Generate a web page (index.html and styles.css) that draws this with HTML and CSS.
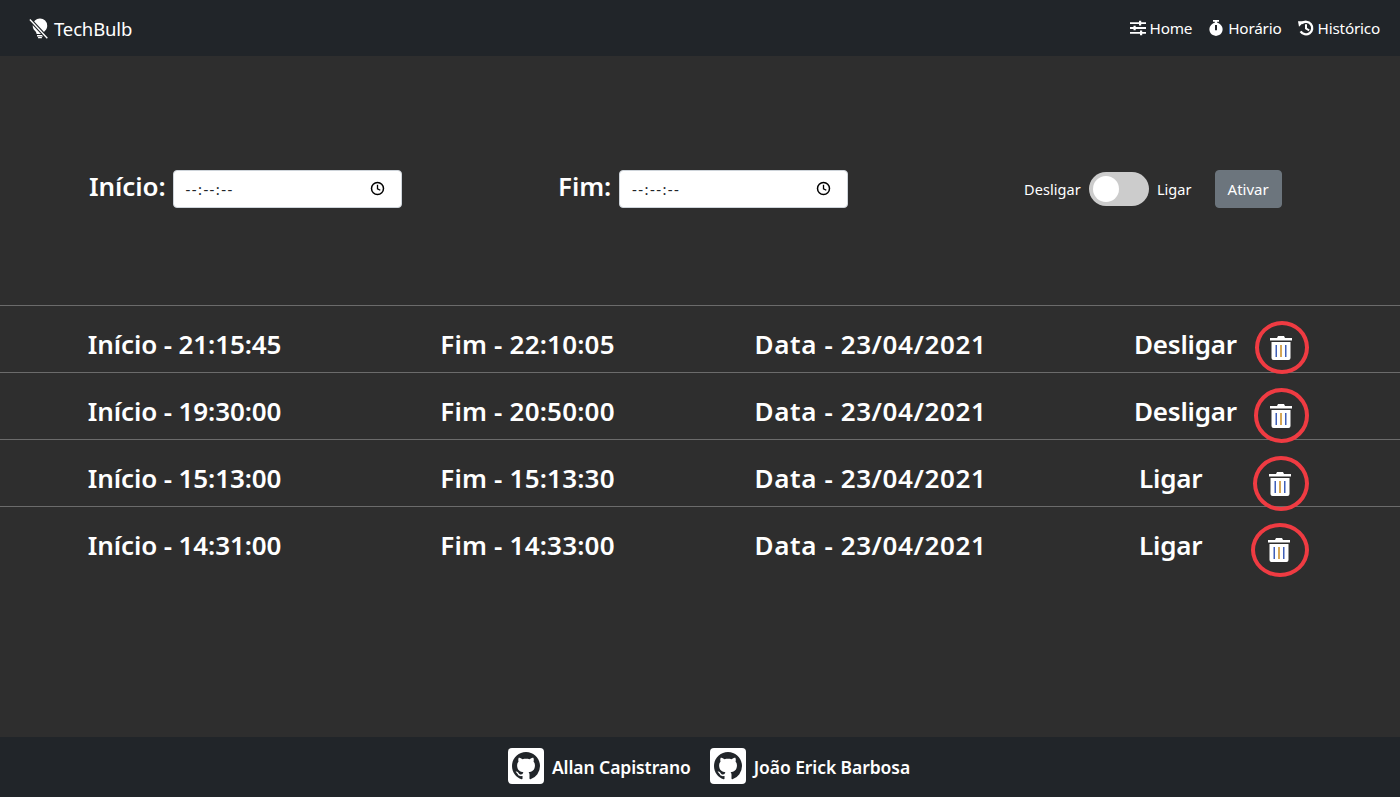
FILE: index.html
```html
<!DOCTYPE html>
<html lang="pt-BR">
<head>
<meta charset="utf-8">
<title>TechBulb</title>
<link rel="stylesheet" href="styles.css">
</head>
<body>
<nav class="navbar">
  <a class="brand">
    <svg class="brand-icon" viewBox="0 0 18 20"><path fill="#fff" d="M10.500 .5a6.800 6.800 0 0 1 6.800 6.800c0 2-.8 3.500-1.900 4.700-.9 1-1.600 2-1.800 3.200H7.200c-.2-1.200-.9-2.200-1.800-3.200C4.300 10.800 3.500 9.300 3.500 7.300A6.800 6.800 0 0 1 10.500 .5zM7.600 16.200h5.600v1.300H7.600zM8.600 18h3.600v1.300H8.600z"/><path fill="none" stroke="#212529" stroke-width="3.400" d="M.8 1.400l16.600 17.800"/><path fill="none" stroke="#fff" stroke-width="1.300" d="M.8 1.400l16.600 17.800"/></svg>
    <span>TechBulb</span>
  </a>
  <div class="nav-links">
    <a class="nav-link">
      <svg class="nav-icon" viewBox="0 0 16 16"><path fill="#fff" d="M0 2.200h9V.8h2.200v1.400H16v1.800h-4.800v1.400H9V4H0zM0 7.100h3.500V5.700h2.200v1.400H16v1.800H5.700v1.400H3.500V8.900H0zM0 12h10v-1.400h2.200V12H16v1.800h-3.800v1.400H10v-1.400H0z"/></svg>Home</a>
    <a class="nav-link">
      <svg class="nav-icon" viewBox="0 0 16 16"><path fill="#fff" d="M5 0h6v1.700H9.200v1.100a6.600 6.600 0 1 1-2.400 0V1.700H5z"/><path fill="#212529" d="M7 5h2v5.200H7z"/></svg>Horário</a>
    <a class="nav-link">
      <svg class="nav-icon" viewBox="0 0 16 16"><path fill="none" stroke="#fff" stroke-width="2.300" d="M3.800 3.300A6.300 6.300 0 1 1 2.600 11.400"/><path fill="#fff" d="M0 1.200h6.600L1 6.800zM7 4.200h2v3.700l2.700 1.600-1 1.700L7 9z"/></svg>Histórico</a>
  </div>
</nav>

<main class="content">
  <section class="controls">
    <div class="time-field time-start">
      <label class="time-label">Início:</label>
      <div class="time-input">
        <span>--:--:--</span>
        <svg class="clock" viewBox="0 0 16 16"><circle cx="8" cy="8" r="6.400" fill="none" stroke="#000" stroke-width="1.600"/><path fill="none" stroke="#000" stroke-width="1.400" d="M8 4v4.300l3 1.600"/></svg>
      </div>
    </div>
    <div class="time-field time-end">
      <label class="time-label">Fim:</label>
      <div class="time-input">
        <span>--:--:--</span>
        <svg class="clock" viewBox="0 0 16 16"><circle cx="8" cy="8" r="6.400" fill="none" stroke="#000" stroke-width="1.600"/><path fill="none" stroke="#000" stroke-width="1.400" d="M8 4v4.300l3 1.600"/></svg>
      </div>
    </div>
    <div class="switch-group">
      <span class="switch-label">Desligar</span>
      <span class="switch"><span class="knob"></span></span>
      <span class="switch-label">Ligar</span>
      <button class="btn-activate">Ativar</button>
    </div>
  </section>

  <section class="schedule">
    <div class="row">
      <span class="cell cell-start">Início - 21:15:45</span>
      <span class="cell cell-end">Fim - 22:10:05</span>
      <span class="cell cell-date">Data - 23/04/2021</span>
      <div class="action"><span class="action-name off">Desligar</span>
        <span class="trash t1"><svg class="trash-icon" viewBox="0 0 22 24"><path fill="#fff" d="M8 0h6l1 2h7v2.600H0V2h7zM1.500 6h19v16a2 2 0 0 1-2 2h-15a2 2 0 0 1-2-2z"/><path fill="#3f5fb8" d="M5.500 9h1.500v12H5.500zM15 9h1.500v12H15z"/><path fill="#c98a1f" d="M10.250 9h1.500v12h-1.500z"/></svg></span></div>
    </div>
    <div class="row">
      <span class="cell cell-start">Início - 19:30:00</span>
      <span class="cell cell-end">Fim - 20:50:00</span>
      <span class="cell cell-date">Data - 23/04/2021</span>
      <div class="action"><span class="action-name off">Desligar</span>
        <span class="trash t2"><svg class="trash-icon" viewBox="0 0 22 24"><path fill="#fff" d="M8 0h6l1 2h7v2.600H0V2h7zM1.500 6h19v16a2 2 0 0 1-2 2h-15a2 2 0 0 1-2-2z"/><path fill="#3f5fb8" d="M5.500 9h1.500v12H5.500zM15 9h1.500v12H15z"/><path fill="#c98a1f" d="M10.250 9h1.500v12h-1.500z"/></svg></span></div>
    </div>
    <div class="row">
      <span class="cell cell-start">Início - 15:13:00</span>
      <span class="cell cell-end">Fim - 15:13:30</span>
      <span class="cell cell-date">Data - 23/04/2021</span>
      <div class="action"><span class="action-name on">Ligar</span>
        <span class="trash t3"><svg class="trash-icon" viewBox="0 0 22 24"><path fill="#fff" d="M8 0h6l1 2h7v2.600H0V2h7zM1.500 6h19v16a2 2 0 0 1-2 2h-15a2 2 0 0 1-2-2z"/><path fill="#3f5fb8" d="M5.500 9h1.500v12H5.500zM15 9h1.500v12H15z"/><path fill="#c98a1f" d="M10.250 9h1.500v12h-1.500z"/></svg></span></div>
    </div>
    <div class="row">
      <span class="cell cell-start">Início - 14:31:00</span>
      <span class="cell cell-end">Fim - 14:33:00</span>
      <span class="cell cell-date">Data - 23/04/2021</span>
      <div class="action"><span class="action-name on">Ligar</span>
        <span class="trash t4"><svg class="trash-icon" viewBox="0 0 22 24"><path fill="#fff" d="M8 0h6l1 2h7v2.600H0V2h7zM1.500 6h19v16a2 2 0 0 1-2 2h-15a2 2 0 0 1-2-2z"/><path fill="#3f5fb8" d="M5.500 9h1.500v12H5.500zM15 9h1.500v12H15z"/><path fill="#c98a1f" d="M10.250 9h1.500v12h-1.500z"/></svg></span></div>
    </div>
  </section>
</main>

<footer class="footer">
  <a class="author">
    <span class="gh-box"><svg class="gh" viewBox="0 0 16 16"><path fill="#212529" d="M8 0C3.580 0 0 3.580 0 8c0 3.540 2.290 6.530 5.470 7.590.4.070.55-.17.55-.38 0-.19-.01-.82-.01-1.490-2.010.37-2.530-.49-2.690-.94-.09-.23-.48-.94-.82-1.130-.28-.15-.68-.52-.01-.53.630-.01 1.080.58 1.230.82.720 1.210 1.870.87 2.330.66.070-.52.280-.87.510-1.070-1.780-.2-3.640-.89-3.640-3.950 0-.87.310-1.590.82-2.150-.08-.2-.36-1.020.08-2.120 0 0 .67-.21 2.200.82.640-.18 1.320-.27 2-.27s1.360.09 2 .27c1.530-1.040 2.200-.82 2.200-.82.440 1.100.160 1.920.08 2.120.51.560.82 1.270.82 2.150 0 3.070-1.870 3.750-3.650 3.950.29.250.54.730.54 1.480 0 1.070-.01 1.930-.01 2.200 0 .21.150.46.550.38A8.010 8.010 0 0 0 16 8c0-4.420-3.580-8-8-8z"/></svg></span>
    <span class="author-name">Allan Capistrano</span>
  </a>
  <a class="author">
    <span class="gh-box"><svg class="gh" viewBox="0 0 16 16"><path fill="#212529" d="M8 0C3.580 0 0 3.580 0 8c0 3.540 2.290 6.530 5.470 7.590.4.070.55-.17.55-.38 0-.19-.01-.82-.01-1.490-2.010.37-2.530-.49-2.690-.94-.09-.23-.48-.94-.82-1.130-.28-.15-.68-.52-.01-.53.630-.01 1.080.58 1.230.82.720 1.210 1.870.87 2.330.66.070-.52.280-.87.510-1.070-1.780-.2-3.640-.89-3.640-3.950 0-.87.310-1.590.82-2.150-.08-.2-.36-1.020.08-2.120 0 0 .67-.21 2.200.82.640-.18 1.320-.27 2-.27s1.360.09 2 .27c1.530-1.040 2.200-.82 2.200-.82.440 1.100.160 1.920.08 2.120.51.560.82 1.270.82 2.150 0 3.070-1.870 3.750-3.650 3.950.29.250.54.730.54 1.480 0 1.070-.01 1.930-.01 2.200 0 .21.150.46.550.38A8.010 8.010 0 0 0 16 8c0-4.420-3.580-8-8-8z"/></svg></span>
    <span class="author-name">João Erick Barbosa</span>
  </a>
</footer>
</body>
</html>
```
FILE: styles.css
```css
* { box-sizing: border-box; }
html, body { margin: 0; height: 100%; }
body {
  display: flex;
  flex-direction: column;
  min-height: 797px;
  background: #2e2e2e;
  color: #fff;
  font-family: "Noto Sans", "Open Sans", sans-serif;
  overflow: hidden;
}
.navbar {
  height: 56px;
  flex: none;
  background: #212529;
  display: flex;
  align-items: center;
  justify-content: space-between;
  padding: 0 20px 0 29px;
}
.brand { display: flex; align-items: center; gap: 6px; font-size: 18.5px; letter-spacing: -0.15px; }
.brand-icon { width: 19px; height: 21px; }
.nav-links { display: flex; gap: 16px; }
.nav-link { display: flex; align-items: center; gap: 4px; font-size: 15.3px; letter-spacing: -0.2px; }
.nav-icon { width: 16px; height: 16px; }
.content { flex: 1; display: flex; flex-direction: column; }
.controls {
  height: 249px;
  flex: none;
  display: flex;
  align-items: center;
  padding: 16px 0 0 89px;
}
.time-field { display: flex; align-items: center; gap: 8px; }
.time-start { width: 469px; gap: 7px; }
.time-end { width: 466px; }
.time-label { font-size: 26px; font-weight: 600; letter-spacing: -0.1px; padding-bottom: 6px; }
.time-input {
  width: 229px;
  height: 38px;
  background: #fff;
  border: 1px solid #ced4da;
  border-radius: 4px;
  color: #212529;
  display: flex;
  align-items: center;
  justify-content: space-between;
  padding: 0 16px 0 12px;
  font-size: 15px;
  letter-spacing: 1.4px;
}
.clock { width: 15px; height: 15px; }
.switch-group { display: flex; align-items: center; }
.switch-label { font-size: 14.5px; letter-spacing: 0.08px; }
.switch {
  width: 60px;
  height: 34px;
  margin: 0 8px;
  border-radius: 17px;
  background: #ccc;
  display: flex;
  align-items: center;
  padding-left: 4px;
}
.knob { width: 26px; height: 26px; border-radius: 50%; background: #fff; }
.btn-activate {
  margin-left: 23px;
  width: 67px;
  height: 38px;
  border: 1px solid #6c757d;
  border-radius: 4px;
  background: #6c757d;
  color: #fff;
  font: inherit;
  font-size: 15px;
  padding: 0;
}
.row {
  height: 67px;
  border-top: 1px solid #6b6b6b;
  display: grid;
  grid-template-columns: 343px 343px 343px 1fr;
  padding-left: 13px;
  align-items: center;
}
.cell {
  text-align: center;
  font-size: 26px;
  font-weight: 600;
  padding-top: 9px;
}
.cell-start { letter-spacing: -0.12px; }
.cell-end { letter-spacing: 0.2px; }
.cell-date { letter-spacing: 0.6px; }
.action { display: flex; align-items: center; position: relative; height: 100%; }
.action-name { font-size: 26px; font-weight: 600; letter-spacing: -0.2px; padding-top: 9px; }
.action-name.off { margin-left: 92px; }
.action-name.on { margin-left: 97px; }
.trash {
  position: absolute;
  right: 91px;
  border: 4px solid #ef3b42;
  border-radius: 50%;
  display: flex;
  align-items: center;
  justify-content: center;
  padding-right: 2px;
}
.t1 { top: 15px; width: 54px; height: 53px; }
.t2 { top: 15px; width: 55px; height: 55px; }
.t3 { top: 16px; width: 56px; height: 55px; }
.t4 { top: 16px; width: 58px; height: 54px; }
.trash-icon { width: 22px; height: 24px; }
.footer {
  height: 60px;
  flex: none;
  background: #212529;
  display: flex;
  align-items: center;
  justify-content: center;
  gap: 19px;
  padding: 0 0 2px 18px;
}
.author { display: flex; align-items: center; gap: 8px; font-size: 17.5px; font-weight: 600; letter-spacing: -0.08px; }
.author-name { padding-top: 2px; }
.gh-box {
  width: 36px;
  height: 36px;
  background: #fff;
  border-radius: 4px;
  display: flex;
  align-items: center;
  justify-content: center;
}
.gh { width: 28px; height: 28px; }
```
